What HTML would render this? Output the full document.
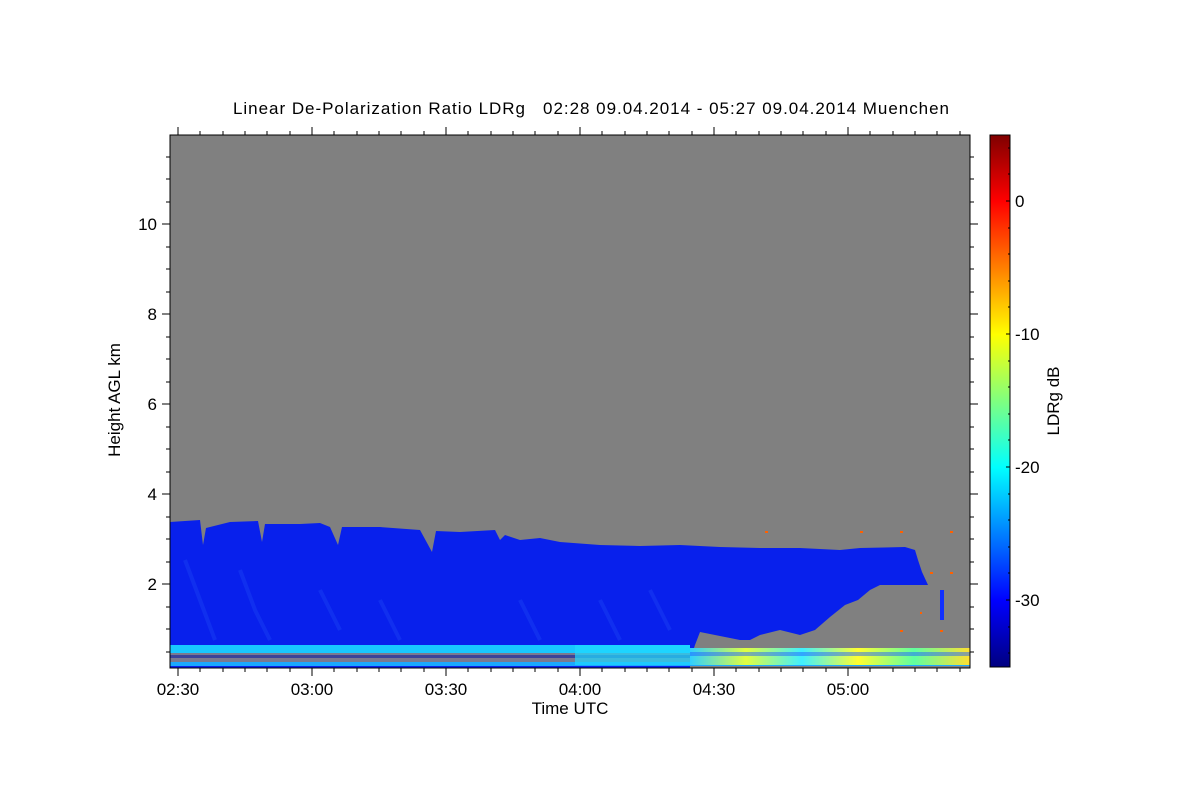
<!DOCTYPE html>
<html><head><meta charset="utf-8"><style>
html,body{margin:0;padding:0;background:#fff;width:1200px;height:800px;overflow:hidden}
svg text{font-family:"Liberation Sans",sans-serif;fill:#000;white-space:pre}
</style></head><body>
<svg width="1200" height="800" viewBox="0 0 1200 800" xmlns="http://www.w3.org/2000/svg">
<defs>
<linearGradient id="jet" x1="0" y1="0" x2="0" y2="1">
<stop offset="0" stop-color="#800000"/>
<stop offset="0.125" stop-color="#ff0000"/>
<stop offset="0.375" stop-color="#ffff00"/>
<stop offset="0.625" stop-color="#00ffff"/>
<stop offset="0.875" stop-color="#0000ff"/>
<stop offset="1" stop-color="#000080"/>
</linearGradient>
<linearGradient id="spk" x1="0" y1="0" x2="1" y2="0">
<stop offset="0" stop-color="#30d0ff"/><stop offset="0.2" stop-color="#e0ff40"/>
<stop offset="0.4" stop-color="#40f0ff"/><stop offset="0.6" stop-color="#ffff30"/>
<stop offset="0.8" stop-color="#60ffa0"/><stop offset="1" stop-color="#ffe030"/>
</linearGradient>
</defs>
<text x="591" y="114" font-size="17" text-anchor="middle" textLength="716" lengthAdjust="spacing">Linear De-Polarization Ratio LDRg   02:28 09.04.2014 - 05:27 09.04.2014 Muenchen</text>
<rect x="170" y="135" width="800" height="533" fill="#808080"/>
<polygon fill="#0820ec" points="170,522 185,521 200,520 203,545 206,528 230,522 258,521 262,542 265,524 300,524 320,523 330,527 338,545 342,527 380,527 420,530 432,552 436,531 460,532 495,530 500,540 505,535 520,540 540,538 560,542 600,545 640,546 680,545 720,547 760,548 800,548 840,550 860,548 905,547 915,550 918,560 922,572 928,585 905,585 880,585 870,590 858,600 845,605 830,617 815,630 800,635 780,630 760,635 750,640 740,640 700,632 695,645 690,660 690,668 170,668"/>
<g stroke="#2a5cf8" stroke-width="4" opacity="0.25" fill="none">
<path d="M185,560 L200,600 L215,640"/><path d="M240,570 L255,610 L270,640"/><path d="M320,590 L340,630"/><path d="M380,600 L400,640"/><path d="M520,600 L540,640"/><path d="M600,600 L620,640"/><path d="M650,590 L670,630"/>
</g>
<rect x="170" y="645" width="520" height="8" fill="#18c8ff"/>
<rect x="170" y="653" width="520" height="9" fill="#7a7a90"/>
<rect x="170" y="655" width="520" height="3" fill="#1020a0" opacity="0.6"/>
<rect x="170" y="662" width="800" height="4" fill="#1aa8ff"/>
<rect x="575" y="645" width="115" height="20" fill="#20d8ff" opacity="0.7"/>
<rect x="690" y="648" width="280" height="17" fill="url(#spk)"/>
<rect x="690" y="652" width="280" height="4" fill="#2060ff" opacity="0.5"/>
<g fill="#ff6000"><rect x="765" y="531" width="3" height="2"/><rect x="860" y="531" width="3" height="2"/><rect x="900" y="531" width="3" height="2"/><rect x="950" y="531" width="3" height="2"/><rect x="930" y="572" width="3" height="2"/><rect x="950" y="572" width="3" height="2"/><rect x="900" y="630" width="3" height="2"/><rect x="940" y="630" width="3" height="2"/><rect x="920" y="612" width="2" height="2"/></g>
<rect x="940" y="590" width="4" height="30" fill="#1030ff"/>
<rect x="170" y="135" width="800" height="533" fill="none" stroke="#000" stroke-width="1"/>
<g stroke="#000" stroke-width="1">
<path d="M178,668v8M312,668v8M446,668v8M580,668v8M714,668v8M848,668v8M178,135v-8M312,135v-8M446,135v-8M580,135v-8M714,135v-8M848,135v-8"/>
<path d="M200,668v4M223,668v4M245,668v4M267,668v4M290,668v4M334,668v4M357,668v4M379,668v4M401,668v4M424,668v4M468,668v4M491,668v4M513,668v4M535,668v4M558,668v4M602,668v4M625,668v4M647,668v4M669,668v4M692,668v4M736,668v4M759,668v4M781,668v4M803,668v4M826,668v4M870,668v4M893,668v4M915,668v4M937,668v4M960,668v4"/>
<path d="M200,135v-4M223,135v-4M245,135v-4M267,135v-4M290,135v-4M334,135v-4M357,135v-4M379,135v-4M401,135v-4M424,135v-4M468,135v-4M491,135v-4M513,135v-4M535,135v-4M558,135v-4M602,135v-4M625,135v-4M647,135v-4M669,135v-4M692,135v-4M736,135v-4M759,135v-4M781,135v-4M803,135v-4M826,135v-4M870,135v-4M893,135v-4M915,135v-4M937,135v-4M960,135v-4"/>
<path d="M170,584h-8M170,494h-8M170,404h-8M170,314h-8M170,224h-8M970,584h8M970,494h8M970,404h8M970,314h8M970,224h8"/>
<path d="M170,652h-4M170,629h-4M170,607h-4M170,562h-4M170,539h-4M170,517h-4M170,472h-4M170,449h-4M170,427h-4M170,382h-4M170,359h-4M170,337h-4M170,292h-4M170,269h-4M170,247h-4M170,202h-4M170,179h-4M170,157h-4"/>
<path d="M970,652h4M970,629h4M970,607h4M970,562h4M970,539h4M970,517h4M970,472h4M970,449h4M970,427h4M970,382h4M970,359h4M970,337h4M970,292h4M970,269h4M970,247h4M970,202h4M970,179h4M970,157h4"/>
</g>
<g font-size="17" text-anchor="middle">
<text x="178" y="695">02:30</text><text x="312" y="695">03:00</text><text x="446" y="695">03:30</text><text x="580" y="695">04:00</text><text x="714" y="695">04:30</text><text x="848" y="695">05:00</text>
<text x="570" y="714">Time UTC</text>
</g>
<g font-size="17" text-anchor="end">
<text x="157" y="590">2</text><text x="157" y="500">4</text><text x="157" y="410">6</text><text x="157" y="320">8</text><text x="157" y="230">10</text>
</g>
<text transform="translate(120,400) rotate(-90)" font-size="17" text-anchor="middle">Height AGL km</text>
<rect x="990" y="135" width="20" height="532" fill="url(#jet)" stroke="#000" stroke-width="1"/>
<g stroke="#000" stroke-width="1">
<path d="M1010,201h-4M1010,334h-4M1010,467h-4M1010,600h-4M1010,148h-2M1010,174h-2M1010,228h-2M1010,254h-2M1010,281h-2M1010,307h-2M1010,361h-2M1010,387h-2M1010,414h-2M1010,440h-2M1010,494h-2M1010,520h-2M1010,547h-2M1010,573h-2M1010,627h-2M1010,653h-2"/>
</g>
<g font-size="17">
<text x="1015" y="207">0</text><text x="1015" y="340">-10</text><text x="1015" y="473">-20</text><text x="1015" y="606">-30</text>
</g>
<text transform="translate(1059,401) rotate(-90)" font-size="17" text-anchor="middle">LDRg dB</text>
</svg>
</body></html>
